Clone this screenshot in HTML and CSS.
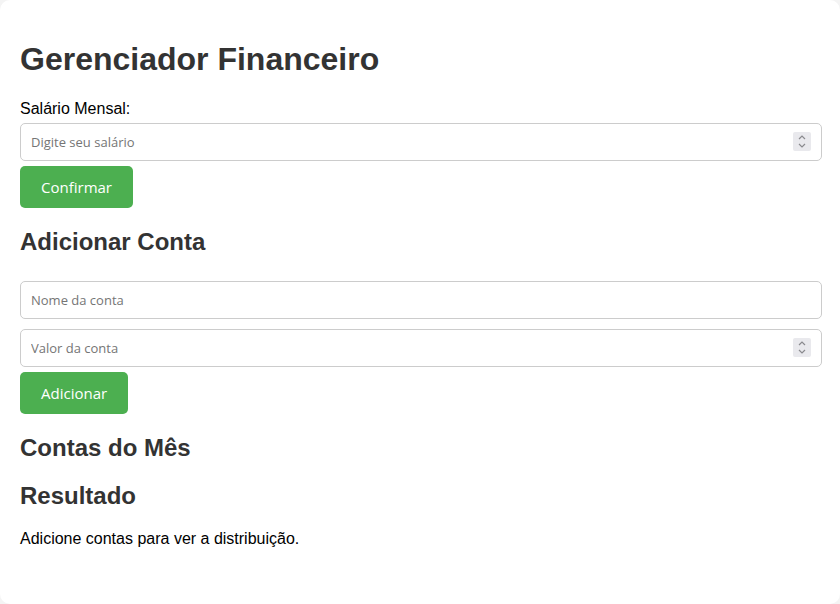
FILE: index.html
```html
<!DOCTYPE html>
<html lang="pt-BR">
<head>
<meta charset="UTF-8">
<title>Gerenciador Financeiro</title>
<link rel="stylesheet" href="styles.css">
</head>
<body>
<div class="container">
  <h1>Gerenciador Financeiro</h1>
  <label for="salario">Salário Mensal:</label>
  <div class="field-wrap">
    <input type="number" id="salario" class="field" placeholder="Digite seu salário">
    <span class="spin" aria-hidden="true">
      <svg width="18" height="19" viewBox="0 0 18 19"><path d="M6 7 L9 4 L12 7" fill="none" stroke="#8a8a8e" stroke-width="1.2"/><path d="M6 12 L9 15 L12 12" fill="none" stroke="#8a8a8e" stroke-width="1.2"/></svg>
    </span>
  </div>
  <button class="btn">Confirmar</button>

  <h2>Adicionar Conta</h2>
  <div class="field-wrap">
    <input type="text" class="field" placeholder="Nome da conta">
  </div>
  <div class="field-wrap">
    <input type="number" class="field" placeholder="Valor da conta">
    <span class="spin" aria-hidden="true">
      <svg width="18" height="19" viewBox="0 0 18 19"><path d="M6 7 L9 4 L12 7" fill="none" stroke="#8a8a8e" stroke-width="1.2"/><path d="M6 12 L9 15 L12 12" fill="none" stroke="#8a8a8e" stroke-width="1.2"/></svg>
    </span>
  </div>
  <button class="btn">Adicionar</button>

  <h2>Contas do Mês</h2>
  <ul class="list"></ul>

  <h2>Resultado</h2>
  <p class="result">Adicione contas para ver a distribuição.</p>
</div>
</body>
</html>
```
FILE: styles.css
```css
html, body {
  margin: 0;
  padding: 0;
}
body {
  background: #f4f4f4;
  font-family: "Liberation Sans", Arial, sans-serif;
}
.container {
  background: #ffffff;
  border-radius: 10px;
  padding: 20px 18px 20px 20px;
  min-height: 100vh;
  box-sizing: border-box;
}
h1, h2 {
  color: #333333;
}
h1 {
  font-size: 32px;
  margin: 21.44px 0;
}
h2 {
  font-size: 24px;
  margin: 19.92px 0;
}
label {
  display: block;
  font-size: 16px;
  line-height: 18.4px;
  color: #000;
}
.field-wrap {
  position: relative;
  padding: 5px 0;
}
.field {
  display: block;
  width: 100%;
  height: 38px;
  box-sizing: border-box;
  padding: 0 10px;
  margin: 0;
  border: 1px solid #cccccc;
  border-radius: 5px;
  font-family: "Open Sans", sans-serif;
  font-size: 13px;
  color: #333;
  -moz-appearance: textfield;
}
.field::placeholder {
  color: #757575;
}
.field::-webkit-outer-spin-button,
.field::-webkit-inner-spin-button {
  -webkit-appearance: none;
  margin: 0;
}
.spin {
  position: absolute;
  top: 14px;
  right: 11px;
  width: 18px;
  height: 19px;
  background: #e9e9ed;
  border-radius: 2px;
  display: flex;
}
.btn {
  display: block;
  background: #4caf50;
  color: #ffffff;
  border: none;
  border-radius: 5px;
  height: 42px;
  padding: 0 21px;
  font-family: "Open Sans", sans-serif;
  font-size: 15px;
  cursor: pointer;
}
.list {
  list-style: none;
  padding: 0;
}
.result {
  font-size: 16px;
  margin: 16px 0;
}
```
